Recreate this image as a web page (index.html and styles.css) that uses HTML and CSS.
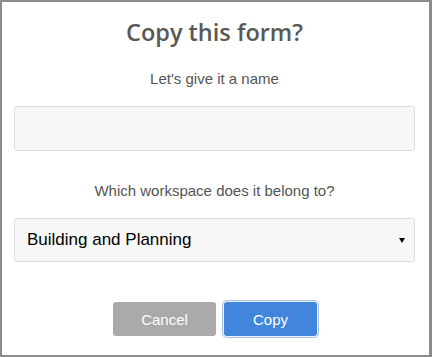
FILE: index.html
```html
<!DOCTYPE html>
<html lang="en">
<head>
<meta charset="utf-8">
<title>Copy this form?</title>
<link rel="stylesheet" href="styles.css">
</head>
<body>
<div class="dialog">
  <h1 class="title">Copy this form?</h1>
  <label class="label label-name" for="name">Let's give it a name</label>
  <input class="field" id="name" type="text">
  <div class="label label-ws">Which workspace does it belong to?</div>
  <div class="select">
    <span class="select-text">Building and Planning</span>
    <svg class="arrow" width="6" height="5" viewBox="0 0 6 5"><path d="M0 0H6L3 5Z" fill="#000"/></svg>
  </div>
  <div class="actions">
    <button class="btn btn-cancel" type="button">Cancel</button>
    <button class="btn btn-copy" type="button">Copy</button>
  </div>
</div>
</body>
</html>
```
FILE: styles.css
```css
html, body {
  margin: 0;
  padding: 0;
}
body {
  background: #8c8c8c;
  width: 432px;
  height: 357px;
  overflow: hidden;
}
.dialog {
  box-sizing: border-box;
  margin: 2px 0 0 2px;
  width: 427px;
  height: 353px;
  background: #fff;
  padding: 15px 14px 0 12px;
  display: flex;
  flex-direction: column;
  font-family: "Liberation Sans", Arial, sans-serif;
}
.title {
  margin: 0;
  text-align: center;
  font-family: "Open Sans", sans-serif;
  font-weight: 600;
  font-size: 23.5px;
  line-height: 30px;
  color: #585858;
}
.label {
  display: block;
  text-align: center;
  font-size: 15px;
  line-height: 20px;
  color: #555;
}
.label-name {
  margin-top: 22px;
}
.field {
  box-sizing: border-box;
  margin: 17px 0 0;
  width: 401px;
  height: 45px;
  background: #f7f7f7;
  border: 1px solid #dcdcdc;
  border-radius: 3px;
  outline: none;
  padding: 0 12px;
  font-size: 17px;
}
.label-ws {
  margin-top: 30px;
}
.select {
  box-sizing: border-box;
  margin-top: 17px;
  width: 401px;
  height: 44px;
  background: #f7f7f7;
  border: 1px solid #dcdcdc;
  border-radius: 3px;
  display: flex;
  align-items: center;
  justify-content: space-between;
  padding: 0 9px 0 12px;
}
.select-text {
  font-size: 17px;
  color: #000;
}
.arrow {
  display: block;
  margin-top: 1px;
}
.actions {
  margin-top: 40px;
  display: flex;
  justify-content: center;
  gap: 8px;
  padding-left: 1px;
}
.btn {
  height: 34px;
  border: none;
  border-radius: 3px;
  color: #fff;
  font-family: "Liberation Sans", Arial, sans-serif;
  font-size: 15px;
  padding: 0;
}
.btn-cancel {
  width: 103px;
  background: #aaaaaa;
}
.btn-copy {
  width: 93px;
  background: #4186dc;
  box-shadow: 0 0 0 1px #eef3fa, 0 0 0 2px #a9c1e2;
}
```
